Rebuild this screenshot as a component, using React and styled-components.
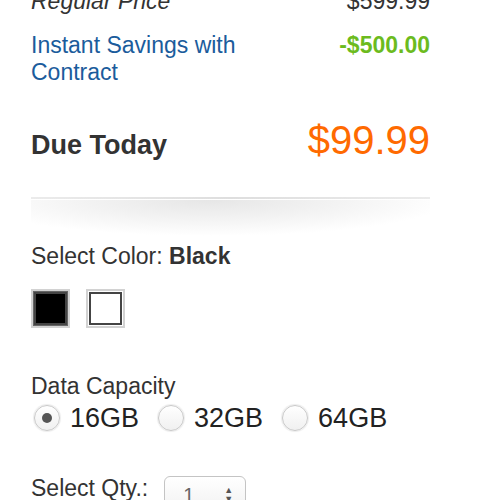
import React from "react";
import styled, { createGlobalStyle } from "styled-components";

const Global = createGlobalStyle`
  html, body { margin: 0; padding: 0; background: #fff; }
  body { font-family: "Liberation Sans", Arial, sans-serif; color: #333; overflow: hidden; }
`;

const Page = styled.div`
  width: 399px;
  padding-left: 31px;
  font-size: 23px;
  line-height: 27px;
`;

const PriceRow = styled.div`
  display: flex;
  justify-content: space-between;
  align-items: ${(p) => p.$align || "baseline"};
  margin-top: ${(p) => p.$mt || 0}px;
`;

const Regular = styled.span`
  font-style: italic;
  color: #333;
`;

const Plain = styled.span`
  color: #333;
`;

const SavingsLabel = styled.span`
  color: #1b5c9c;
  width: 225px;
`;

const Savings = styled.span`
  color: #6cbb1e;
  font-weight: bold;
`;

const DueLabel = styled.span`
  font-size: 27px;
  font-weight: bold;
  color: #333;
  line-height: 46px;
`;

const DuePrice = styled.span`
  font-size: 40px;
  color: #ff6a00;
  line-height: 46px;
`;

const Divider = styled.div`
  margin-top: 29px;
  height: 2px;
  background: linear-gradient(to right, #ebebeb, #dedede 50%, #ebebeb);
`;

const Shadow = styled.div`
  margin-top: 1px;
  height: 36px;
  background: radial-gradient(ellipse 60% 100% at 45% 0%, #e6e6e6 0%, #f2f2f2 50%, #ffffff 100%);
`;

const Label = styled.div`
  margin-top: ${(p) => p.$mt || 0}px;
  color: #333;
`;

const Strong = styled.b`
  font-weight: bold;
`;

const Swatches = styled.div`
  display: flex;
  gap: 16px;
  margin-top: 19px;
`;

const Swatch = styled.div`
  width: 33px;
  height: 33px;
  border: 2px solid #d2d2d2;
  padding: 1px;
  box-sizing: content-box;
  background: ${(p) => (p.$color === "#000" ? "#666" : "#fff")};
  display: flex;
`;

const SwatchFill = styled.div`
  flex: 1;
  border: 2px solid #444;
  background: ${(p) => p.$color};
`;

const Radios = styled.div`
  display: flex;
  align-items: center;
  margin-top: 3px;
  font-size: 27px;
  line-height: 30px;
`;

const RadioItem = styled.label`
  display: flex;
  align-items: center;
  gap: 10px;
  margin-left: ${(p) => (p.$first ? 3 : 19)}px;
  color: #222;
`;

const RadioCircle = styled.span`
  width: 24px;
  height: 24px;
  border-radius: 50%;
  border: 1px solid #c8c8c8;
  box-shadow: 0 0 1px 1px #ededed;
  background: linear-gradient(#ffffff, #f0f0f0);
  display: flex;
  align-items: center;
  justify-content: center;
`;

const RadioDot = styled.span`
  width: 10px;
  height: 10px;
  border-radius: 50%;
  background: #555;
`;

const QtyRow = styled.div`
  display: flex;
  align-items: flex-start;
  gap: 16px;
  margin-top: 42px;
`;

const QtySelect = styled.div`
  margin-top: 1px;
  width: 82px;
  height: 32px;
  border: 1px solid #c4c4c4;
  border-radius: 6px;
  background: linear-gradient(#ffffff, #f3f3f3);
  display: flex;
  align-items: center;
  justify-content: space-between;
  padding: 6px 12px 0 18px;
  box-sizing: border-box;
  font-size: 20px;
  color: #666;
`;

const Arrows = styled.span`
  display: flex;
  flex-direction: column;
  font-size: 9px;
  line-height: 9px;
  color: #555;
`;

export default function App() {
  return (
    <>
      <Global />
      <Page>
        <PriceRow style={{ marginTop: -12 }}>
          <Regular>Regular Price</Regular>
          <Plain>$599.99</Plain>
        </PriceRow>
        <PriceRow $mt={17} $align="flex-start">
          <SavingsLabel>Instant Savings with Contract</SavingsLabel>
          <Savings>-$500.00</Savings>
        </PriceRow>
        <PriceRow $mt={31}>
          <DueLabel>Due Today</DueLabel>
          <DuePrice>$99.99</DuePrice>
        </PriceRow>
        <Divider />
        <Shadow />
        <Label $mt={7}>
          Select Color: <Strong>Black</Strong>
        </Label>
        <Swatches>
          <Swatch $color="#000">
            <SwatchFill $color="#000" />
          </Swatch>
          <Swatch $color="#fff">
            <SwatchFill $color="#fff" />
          </Swatch>
        </Swatches>
        <Label $mt={45}>Data Capacity</Label>
        <Radios>
          <RadioItem $first>
            <RadioCircle>
              <RadioDot />
            </RadioCircle>
            16GB
          </RadioItem>
          <RadioItem>
            <RadioCircle />
            32GB
          </RadioItem>
          <RadioItem>
            <RadioCircle />
            64GB
          </RadioItem>
        </Radios>
        <QtyRow>
          <Label>Select Qty.:</Label>
          <QtySelect>
            <span>1</span>
            <Arrows>
              <span>▲</span>
              <span>▼</span>
            </Arrows>
          </QtySelect>
        </QtyRow>
      </Page>
    </>
  );
}
